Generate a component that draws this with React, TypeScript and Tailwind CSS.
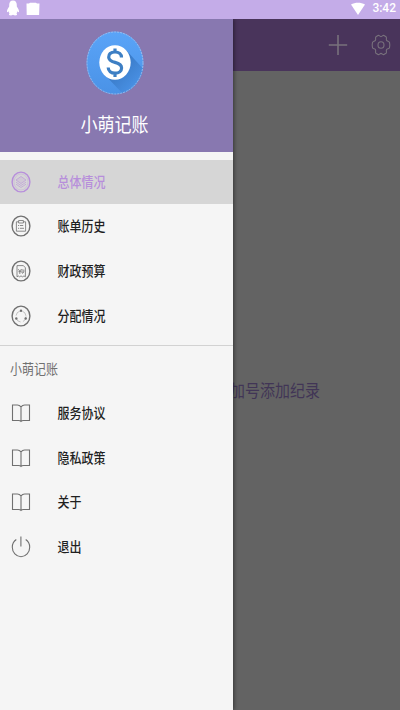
import type { ReactNode } from 'react';

type Item = { label: string; icon: ReactNode; active?: boolean };

const Ring = ({ children }: { children: ReactNode }) => (
  <svg viewBox="0 0 20 22" className="h-[22px] w-5" fill="none" stroke="currentColor">
    <ellipse cx="10" cy="11" rx="8.9" ry="9.9" strokeWidth="1.4" />
    {children}
  </svg>
);

const LayersIcon = () => (
  <Ring>
    <g strokeWidth="0.7">
      <ellipse cx="10" cy="11" rx="7" ry="8" opacity="0.4" />
      <path d="M10 5.500l5 3.500-5 3.500L5 9z" fill="currentColor" fillOpacity="0.2" opacity="0.8" />
      <path d="M5 11.200l5 3.300 5-3.300M5 13.200l5 3.300 5-3.300" opacity="0.8" />
    </g>
  </Ring>
);

const ClipboardIcon = () => (
  <Ring>
    <g strokeWidth="0.8">
      <path d="M7.600 6.800H5.400v9.400h9.200V6.800h-2.200" />
      <path d="M7.600 5.500h4.800V8H7.600z" />
      <path d="M7 10.500h1.200M9 10.500h3.200M7 13.300h1.200M9 13.300h4" />
    </g>
  </Ring>
);

const BudgetIcon = () => (
  <Ring>
    <g strokeWidth="0.8">
      <path d="M6 5.600h6.400l2 2.200v9l-1.400-.9-1.500.9-1.500-.9-1.500.9-1.300-.9-1.200.9z" />
      <path d="M7.300 9.200l1.500 2 1.500-2M8.800 11v3M7.400 11.700h2.800M11 9v4M12.800 9.500v2.500M11 13.500l2-1.500" />
    </g>
  </Ring>
);

const ShareRingIcon = () => (
  <Ring>
    <ellipse cx="10" cy="11.500" rx="5" ry="5.500" strokeWidth="0.6" strokeDasharray="6 2.500" opacity="0.65" />
    <g fill="currentColor" stroke="none">
      <circle cx="10" cy="5.800" r="1.200" />
      <circle cx="5.300" cy="13.500" r="1.200" />
      <circle cx="14.700" cy="13.500" r="1.200" />
    </g>
  </Ring>
);

const BookIcon = () => (
  <svg viewBox="0 0 20 22" className="h-[22px] w-5" fill="none" stroke="currentColor" strokeWidth="1.1">
    <path d="M10 4.800C8.800 3.400 7.800 3 6.400 3H1.500v15.500h6.100c1.200 0 1.800.2 2.400.9.600-.7 1.200-.9 2.400-.9h6.100V3h-4.900C12.200 3 11.200 3.400 10 4.800zM10 4.800v14.600" />
  </svg>
);

const PowerIcon = () => (
  <svg viewBox="0 0 20 22" className="h-[22px] w-5" fill="none" stroke="currentColor" strokeWidth="1.100">
    <path d="M9.900.5v10M5.300 3.500C2.800 5.200 1.300 8.100 1.300 11.200c0 5.200 3.900 9.500 8.700 9.500s8.700-4.300 8.700-9.500c0-3.100-1.500-6-4-7.700" />
  </svg>
);

const primary: Item[] = [
  { label: '总体情况', icon: <LayersIcon />, active: true },
  { label: '账单历史', icon: <ClipboardIcon /> },
  { label: '财政预算', icon: <BudgetIcon /> },
  { label: '分配情况', icon: <ShareRingIcon /> },
];

const secondary: Item[] = [
  { label: '服务协议', icon: <BookIcon /> },
  { label: '隐私政策', icon: <BookIcon /> },
  { label: '关于', icon: <BookIcon /> },
  { label: '退出', icon: <PowerIcon /> },
];

const Row = ({ label, icon, active }: Item) => (
  <li className={`flex h-[44.6px] items-center pl-[10.5px] ${active ? 'bg-[#d6d6d6] text-[#b78edb]' : 'text-[#707070]'}`}>
    {icon}
    <span className={`mb-[2px] ml-[27px] scale-y-[1.13] text-[12px] leading-none font-medium ${active ? '' : 'text-[#1f1f1f]'}`}>{label}</span>
  </li>
);

const StatusBar = () => (
  <header className="relative z-10 flex h-[19px] shrink-0 items-center bg-[#c4ace8] pr-[4px] pl-[6px] text-white">
    <svg viewBox="0 0 14 16" className="mb-[3px] h-4 w-[14px]" fill="currentColor">
      <path d="M7 .5C4.400.5 3.200 2.500 3.200 5v1.600C2.200 8 .8 10 1 11.700c.1.800.8.400 1.500-.5.2.9.6 1.500 1.100 2-.8.4-1 1.900.2 2.100 1.100.2 2.200 0 3.200-.5 1 .5 2.100.7 3.200.5 1.200-.2 1-1.700.2-2.100.5-.5.9-1.100 1.100-2 .7.9 1.400 1.300 1.500.5.2-1.700-1.200-3.700-2.200-5.100V5C10.800 2.500 9.600.5 7 .5z" />
    </svg>
    <svg viewBox="0 0 14 14" className="mb-px ml-[6px] h-[14px] w-[14px]" fill="currentColor">
      <path d="M.5 1.500H3L4 .7h6l1 .8h2.500l-.4 11.500H.7z" />
    </svg>
    <svg viewBox="0 0 14 13" className="mb-[3px] ml-auto h-[13px] w-[14px]" fill="currentColor">
      <path d="M0 2.500C4 .3 10 .3 14 2.500L7 13z" />
    </svg>
    <span className="mb-[3px] ml-[7px] font-[Roboto,sans-serif] text-[12px] leading-none font-medium">3:42</span>
  </header>
);

export default function App() {
  return (
    <div className="relative flex h-[710px] w-[400px] flex-col overflow-hidden bg-[#636363] font-['Noto_Sans_CJK_SC',sans-serif]">
      <StatusBar />
      <nav className="flex h-[52px] shrink-0 items-center justify-end bg-[#49345b] pr-[9.5px] text-[#78717c]">
        <svg viewBox="0 0 20 22" className="mb-px h-[22px] w-5" fill="none" stroke="currentColor" strokeWidth="1.6">
          <path d="M10 1v20M.8 11h18.400" />
        </svg>
        <svg viewBox="0 0 20 22" className="mb-px ml-[23px] h-[22px] w-5" fill="none" stroke="currentColor" strokeWidth="1.1">
          <path d="M7 1.500C8.200.9 8.700 2.600 10 2.600S11.800.9 13 1.500l2 1.200c1.100.8-.1 2.300.5 3.500s2.600.8 3 2.200c.4 1.700.4 3.500 0 5.200-.4 1.400-2.400 1-3 2.200s.6 2.700-.5 3.500l-2 1.200c-1.200.6-1.700-1.100-3-1.100s-1.800 1.700-3 1.100l-2-1.200c-1.100-.8.1-2.300-.5-3.500s-2.600-.8-3-2.200c-.4-1.700-.4-3.500 0-5.200.4-1.400 2.400-1 3-2.200S3.900 3.500 5 2.700z" />
          <ellipse cx="10" cy="11" rx="3" ry="3.300" />
        </svg>
      </nav>
      <main className="flex flex-1 items-center justify-end pr-[80px] pb-[2px]">
        <p className="scale-y-[1.13] text-[15px] leading-none text-[#413556]">加号添加纪录</p>
      </main>

      <aside className="absolute top-[19px] bottom-0 left-0 flex w-[233px] flex-col bg-[#f5f5f5] shadow-[1px_0_4px_rgba(0,0,0,0.45)]">
        <div className="flex h-[133px] shrink-0 flex-col items-center bg-[#8878b0] pt-[12px]">
          <svg viewBox="0 0 58 64" className="ml-[-3px] h-16 w-[58px]">
            <defs>
              <clipPath id="badge"><ellipse cx="29" cy="32" rx="28.500" ry="31.500" /></clipPath>
              <linearGradient id="face" x1="0" y1="0" x2="0" y2="1">
                <stop offset="0" stopColor="#5aa4f8" />
                <stop offset="1" stopColor="#4a92e6" />
              </linearGradient>
              <linearGradient id="shade" x1="0.3" y1="0.3" x2="0.8" y2="0.8">
                <stop offset="0" stopColor="#3878c4" />
                <stop offset="1" stopColor="#4a92e6" />
              </linearGradient>
            </defs>
            <ellipse cx="29" cy="32" rx="28.500" ry="31.500" fill="url(#face)" />
            <path clipPath="url(#badge)" d="M40 19L60 41V64H38L18 43z" fill="url(#shade)" />
            <ellipse cx="29" cy="32" rx="28" ry="31" fill="none" stroke="#a9c4ee" strokeWidth="0.8" strokeDasharray="2 1" />
            <ellipse cx="29" cy="31.500" rx="15.700" ry="17.300" fill="#fff" />
            <path d="M35.500 26.500c0-3.200-2.500-5.500-6.500-5.500s-6.300 2.100-6.300 5.200c0 3.200 2.700 4.200 6.300 5.200s6.600 2.200 6.600 5.500c0 3.300-2.700 5.300-6.600 5.300s-6.800-2.200-6.800-5.600M29 17.500v4M29 41.500v4.500" fill="none" stroke="#3d7fc4" strokeWidth="3.200" />
          </svg>
          <h1 className="mt-[20px] ml-[-4px] scale-y-[1.13] text-[17px] leading-none text-white">小萌记账</h1>
        </div>
        <ul className="pt-[7.5px]">
          {primary.map((item) => <Row key={item.label} {...item} />)}
        </ul>
        <section className="mt-[7px] border-t border-[#d2d2d2] pt-[16px]">
          <h2 className="ml-[10px] w-fit scale-y-[1.13] text-[12px] leading-none text-[#707070]">小萌记账</h2>
          <ul className="mt-[17px]">
            {secondary.map((item) => <Row key={item.label} {...item} />)}
          </ul>
        </section>
      </aside>
    </div>
  );
}
